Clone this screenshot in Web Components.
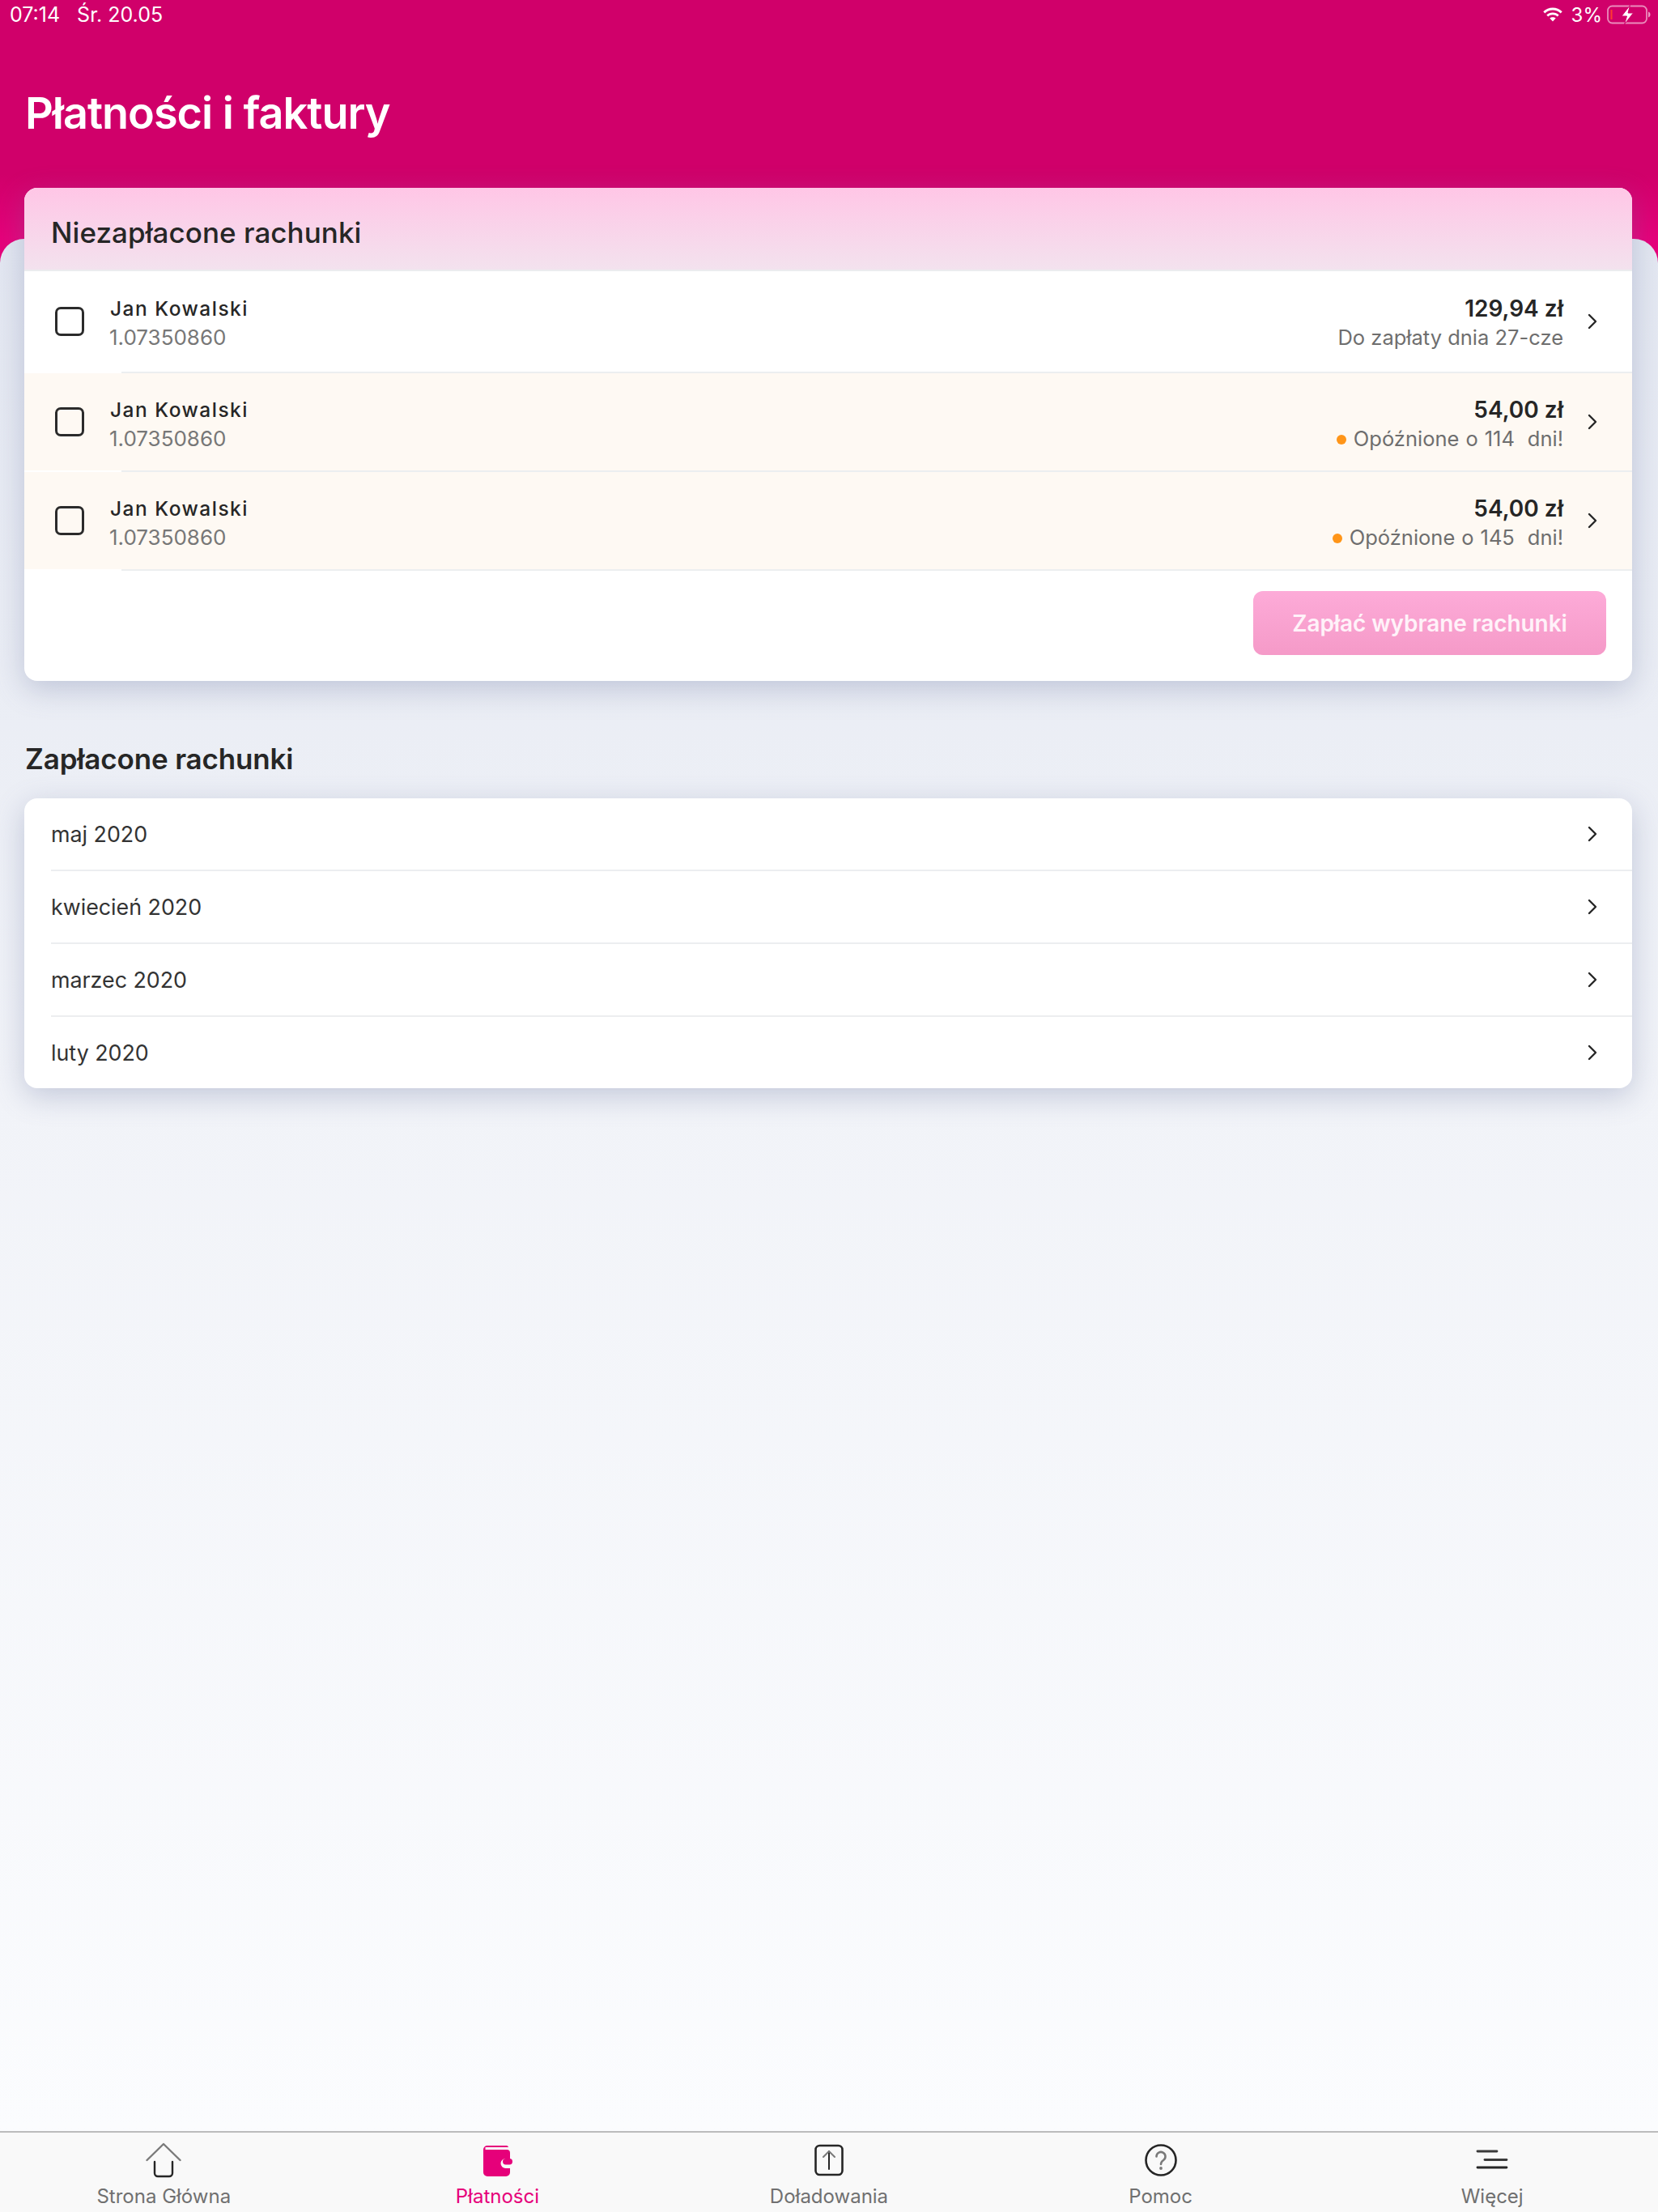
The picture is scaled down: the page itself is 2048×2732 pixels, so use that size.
<!DOCTYPE html>
<html lang="pl">
<head>
<meta charset="utf-8">
<title>Płatności i faktury</title>
<style>
  html, body { margin: 0; padding: 0; }
  body { font-family: Inter, "Liberation Sans", sans-serif; color: #262626; }
</style>
</head>
<body>
<app-screen>
  <app-header slot="header" title="Płatności i faktury"></app-header>

  <bill-card title="Niezapłacone rachunki">
    <bill-row tall amount="129,94 zł" note="Do zapłaty dnia 27-cze"></bill-row>
    <bill-row late amount="54,00 zł" note="Opóźnione o 114  dni!"></bill-row>
    <bill-row late amount="54,00 zł" note="Opóźnione o 145  dni!"></bill-row>
  </bill-card>

  <month-list title="Zapłacone rachunki">
    <month-row>maj 2020</month-row>
    <month-row>kwiecień 2020</month-row>
    <month-row>marzec 2020</month-row>
    <month-row last>luty 2020</month-row>
  </month-list>

  <tab-bar slot="tabs">
    <tab-item label="Strona Główna" icon="home"></tab-item>
    <tab-item label="Płatności" icon="wallet" active></tab-item>
    <tab-item label="Doładowania" icon="topup"></tab-item>
    <tab-item label="Pomoc" icon="help"></tab-item>
    <tab-item label="Więcej" icon="more"></tab-item>
  </tab-bar>
</app-screen>

<script>
  (() => {
    const chevron = `<svg width="12" height="20" viewBox="0 0 12 20" fill="none" stroke="#262626" stroke-width="2.4" stroke-linecap="round" stroke-linejoin="round"><path d="M2 2l8 8-8 8"/></svg>`;

    const tabIcons = {
      home: `<svg width="44" height="44" viewBox="0 0 44 44" fill="none" stroke-width="2.4" stroke-linecap="round" stroke-linejoin="round">
        <path d="M1.500 22L22 2l20.500 20" stroke="#7a7a7a"/>
        <path d="M11 24v14a4 4 0 0 0 4 4h14a4 4 0 0 0 4-4V24" stroke="#262626"/></svg>`,
      wallet: `<svg width="44" height="44" viewBox="0 0 44 44"><path fill="#e6007a" d="M5 9a5 5 0 0 1 5-5h24a2.500 2.500 0 0 1 2 2H7.500v3H34a4 4 0 0 1 4 4v7h-5.500a6 6 0 0 0 0 12H38v5a5 5 0 0 1-5 5H10a5 5 0 0 1-5-5z"/><rect x="29" y="20" width="12" height="7.500" rx="3.700" fill="#e6007a"/></svg>`,
      topup: `<svg width="44" height="44" viewBox="0 0 44 44" fill="none" stroke-linecap="round" stroke-linejoin="round">
        <rect x="5.500" y="4" width="33" height="36" rx="5" stroke="#262626" stroke-width="2.600"/>
        <path d="M22 33V11" stroke="#262626" stroke-width="2"/>
        <path d="M15 18l7-7 7 7" stroke="#7a7a7a" stroke-width="2"/></svg>`,
      help: `<svg width="44" height="44" viewBox="0 0 44 44" fill="none">
        <circle cx="22" cy="22" r="18.500" stroke="#262626" stroke-width="2.600"/>
        <path d="M16.500 17.500a5.500 5.500 0 1 1 8.600 4.500c-2 1.400-3.100 2.500-3.100 5" stroke="#7a7a7a" stroke-width="2.600" stroke-linecap="round"/>
        <circle cx="22" cy="32" r="1.900" fill="#7a7a7a"/></svg>`,
      more: `<svg width="44" height="44" viewBox="0 0 44 44" fill="none" stroke-width="2.800" stroke-linecap="round">
        <path d="M4 11h24" stroke="#3a3a3a"/><path d="M13 21.500h27" stroke="#3a3a3a"/><path d="M4 31h36" stroke="#262626"/></svg>`,
    };

    class AppScreen extends HTMLElement {
      constructor() {
        super();
        this.attachShadow({mode: 'open'});
        this.shadowRoot.innerHTML = `
          <style>
            :host { display: flex; flex-direction: column; height: 2732px; background: #e6007a; overflow: hidden; }
            .panel {
              flex: 1;
              min-height: 0;
              padding: 0 32px 0 30px;
              border-radius: 30px 30px 0 0;
              background: linear-gradient(180deg, #e3e7f1 0%, #f1f3f8 45%, #fbfcfe 100%);
            }
          </style>
          <slot name="header"></slot>
          <div class="panel"><slot></slot></div>
          <slot name="tabs"></slot>`;
      }
    }

    class AppHeader extends HTMLElement {
      constructor() {
        super();
        this.attachShadow({mode: 'open'});
        this.shadowRoot.innerHTML = `
          <style>
            :host { display: block; height: 295px; color: #fff; background: linear-gradient(180deg, #d0006a 0, #d0006a 215px, #e6007a 295px); }
            .status { display: flex; align-items: center; height: 36px; padding: 0 9px 0 12px; font-size: 25px; }
            .date { margin-left: 21px; }
            .right { margin-left: auto; display: flex; align-items: center; font-size: 24px; }
            .pct { margin: 0 6px 0 9px; }
            h1 { margin: 0; padding: 58px 0 0 31px; font-size: 54px; line-height: 92px; font-weight: 600; letter-spacing: -1px; }
          </style>
          <div class="status">
            <span>07:14</span><span class="date">Śr. 20.05</span>
            <span class="right">
              <svg width="28" height="20" viewBox="0 0 28 20" fill="#fff"><path d="M14 4.500c3.800 0 7.200 1.500 9.700 3.900l2-2.100C22.600 3.300 18.500 1.500 14 1.500S5.400 3.300 2.300 6.300l2 2.100C6.800 6 10.200 4.500 14 4.500z"/><path d="M14 10.300c2.200 0 4.200.9 5.700 2.200l2-2.100c-2-1.900-4.800-3-7.700-3s-5.700 1.100-7.700 3l2 2.100c1.500-1.300 3.500-2.200 5.700-2.200z"/><path d="M14 13.200c-1.400 0-2.700.5-3.700 1.400L14 18.500l3.700-3.900c-1-.9-2.300-1.400-3.700-1.400z"/></svg>
              <span class="pct">3%</span>
              <svg width="54" height="24" viewBox="0 0 54 24" fill="none"><rect x="1" y="1.500" width="48" height="21" rx="5.500" stroke="#fff" stroke-opacity=".55" stroke-width="1.800"/><rect x="4.500" y="6" width="2" height="12" fill="#ff3b30"/><path d="M51 8.500c1.600.6 2.500 1.800 2.500 3.500s-.9 2.900-2.500 3.500z" fill="#fff" fill-opacity=".6"/><path d="M28.500 0.500L18 14h6.500l-3 10L32.500 10h-6.500z" fill="#fff" stroke="#d0006a" stroke-width="1" stroke-linejoin="round"/></svg>
            </span>
          </div>
          <h1>${this.getAttribute('title')}</h1>`;
      }
    }

    class BillCard extends HTMLElement {
      constructor() {
        super();
        this.attachShadow({mode: 'open'});
        this.shadowRoot.innerHTML = `
          <style>
            :host {
              display: block;
              position: relative;
              margin-top: -63px;
              border-radius: 16px;
              background: #fff;
              box-shadow: 0 10px 36px rgba(100, 112, 155, .32);
              overflow: hidden;
            }
            .head {
              height: 103px;
              padding: 8px 0 0 33px;
              box-sizing: border-box;
              display: flex;
              align-items: center;
              font-size: 35px;
              font-weight: 500;
              letter-spacing: 0.05px;
              background: linear-gradient(180deg, #ffc6e6 0%, #f3e2ee 100%);
              border-bottom: 2px solid #ebecef;
            }
            .foot { display: flex; justify-content: flex-end; padding: 25px 32px 32px; }
            .pay {
              width: 436px;
              height: 79px;
              display: flex;
              align-items: center;
              justify-content: center;
              border-radius: 12px;
              font-size: 28px;
              font-weight: 600;
              letter-spacing: -0.1px;
              color: #fff2f9;
              background: linear-gradient(180deg, #fdabd8 0%, #f59ac8 100%);
            }
          </style>
          <div class="head">${this.getAttribute('title')}</div>
          <slot></slot>
          <div class="foot"><div class="pay">Zapłać wybrane rachunki</div></div>`;
      }
    }

    class BillRow extends HTMLElement {
      constructor() {
        super();
        this.attachShadow({mode: 'open'});
        const dot = this.hasAttribute('late') ? '<i class="dot"></i>' : '';
        this.shadowRoot.innerHTML = `
          <style>
            :host { display: block; }
            :host([late]) .body { background: #fef9f3; height: 120px; }
            :host([late]) .who, :host([late]) .pay { padding-top: 5px; }
            :host([late]) .note { word-spacing: 0.8px; }
            .body { height: 124px; display: flex; align-items: center; padding: 0 43px 0 38px; }
            .check { width: 36px; height: 36px; box-sizing: border-box; border: 3px solid #2b2b2b; border-radius: 7px; flex: none; }
            .who { margin-left: 32px; padding-top: 3px; display: flex; flex-direction: column; }
            .name { font-size: 24.500px; line-height: 36px; font-weight: 500; letter-spacing: 1.500px; }
            .num { font-size: 26px; line-height: 36px; color: #777; margin-left: -1px; }
            .pay { margin-left: auto; padding-top: 3px; display: flex; flex-direction: column; align-items: flex-end; }
            .amount { font-size: 28px; line-height: 36px; font-weight: 600; }
            .note { font-size: 25.500px; line-height: 36px; color: #6e6e6e; white-space: pre; display: flex; align-items: center; }
            .dot { width: 12px; height: 12px; border-radius: 50%; background: #ff9518; margin: 3px 9px 0 0; }
            .arrow { margin-left: 30px; display: flex; }
            .sep { height: 2px; margin-left: 120px; background: #eceef0; }
          </style>
          <div class="body">
            <div class="check"></div>
            <div class="who">
              <span class="name">Jan Kowalski</span>
              <span class="num">1.07350860</span>
            </div>
            <div class="pay">
              <span class="amount">${this.getAttribute('amount')}</span>
              <span class="note">${dot}${this.getAttribute('note')}</span>
            </div>
            <div class="arrow">${chevron}</div>
          </div>
          <div class="sep"></div>`;
      }
    }

    class MonthList extends HTMLElement {
      constructor() {
        super();
        this.attachShadow({mode: 'open'});
        this.shadowRoot.innerHTML = `
          <style>
            :host { display: block; position: relative; }
            h2 { margin: 0; padding: 72px 0 0 1px; height: 73px; font-size: 35px; line-height: 48px; font-weight: 600; letter-spacing: -0.15px; }
            .box { border-radius: 16px; background: #fff; box-shadow: 0 10px 36px rgba(100, 112, 155, .32); overflow: hidden; }
          </style>
          <h2>${this.getAttribute('title')}</h2>
          <div class="box"><slot></slot></div>`;
      }
    }

    class MonthRow extends HTMLElement {
      constructor() {
        super();
        this.attachShadow({mode: 'open'});
        this.shadowRoot.innerHTML = `
          <style>
            :host { display: block; padding-left: 33px; }
            .row { height: 88px; display: flex; align-items: center; padding-right: 43px; border-bottom: 2px solid #eceef0; font-size: 26.800px; color: #333; }
            :host([last]) .row { border-bottom: 0; height: 88px; }
            .row svg { margin-left: auto; }
          </style>
          <div class="row"><slot></slot>${chevron}</div>`;
      }
    }

    class TabBar extends HTMLElement {
      constructor() {
        super();
        this.attachShadow({mode: 'open'});
        this.shadowRoot.innerHTML = `
          <style>
            :host { display: grid; grid-template-columns: repeat(5, 1fr); height: 100px; box-sizing: border-box; border-top: 2px solid #bcbcbc; background: #f9f9f9; }
          </style>
          <slot></slot>`;
      }
    }

    class TabItem extends HTMLElement {
      constructor() {
        super();
        this.attachShadow({mode: 'open'});
        this.shadowRoot.innerHTML = `
          <style>
            :host { display: flex; flex-direction: column; align-items: center; padding-top: 12px; font-size: 24px; color: #707070; }
            :host([active]) { color: #e6007a; }
            :host([icon="home"]) { padding-right: 5px; }
            svg { display: block; }
            span { margin-top: 8px; line-height: 30px; }
          </style>
          ${tabIcons[this.getAttribute('icon')]}
          <span>${this.getAttribute('label')}</span>`;
      }
    }

    window.customElements.define('app-screen', AppScreen);
    window.customElements.define('app-header', AppHeader);
    window.customElements.define('bill-card', BillCard);
    window.customElements.define('bill-row', BillRow);
    window.customElements.define('month-list', MonthList);
    window.customElements.define('month-row', MonthRow);
    window.customElements.define('tab-bar', TabBar);
    window.customElements.define('tab-item', TabItem);
  })();
</script>
</body>
</html>
